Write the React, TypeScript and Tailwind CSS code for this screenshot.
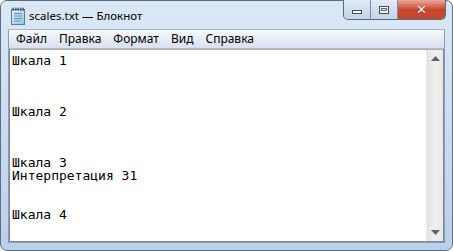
import React from 'react';

const lines = [
  'Шкала 1',
  '',
  '',
  '',
  'Шкала 2',
  '',
  '',
  '',
  'Шкала 3',
  'Интерпретация 31',
  '',
  '',
  'Шкала 4',
];

const menu = ['Файл', 'Правка', 'Формат', 'Вид', 'Справка'];

function NotepadIcon() {
  return (
    <svg width="16" height="18" viewBox="0 0 16 18">
      <defs>
        <linearGradient id="pad" x1="0" y1="0" x2="1" y2="1">
          <stop offset="0" stopColor="#e8f3fb" />
          <stop offset="1" stopColor="#8fc3e6" />
        </linearGradient>
      </defs>
      <rect x="1.5" y="2.5" width="13" height="15" fill="url(#pad)" stroke="#5b7c98" />
      <path d="M4 6.5h8M4 9h8M4 11.5h8M4 14h6" stroke="#6c8aa6" strokeWidth="1" />
      {[3, 5.5, 8, 10.5, 13].map((x) => (
        <rect key={x} x={x - 0.5} y="0.5" width="1.5" height="3.5" rx="0.7" fill="#4f6378" />
      ))}
    </svg>
  );
}

export default function App() {
  return (
    <div className="w-[453px] h-[251px] bg-white overflow-hidden">
      <div className="w-[453px] h-[251px] rounded-[7px] border border-[#5d6d82] bg-gradient-to-b from-[#dbe8f6] via-[#c9dcf0] to-[#b9d0ea] flex flex-col px-[7px] pb-[7px]">
        {/* title bar */}
        <div className="h-[28px] flex items-start relative">
          <div className="mt-[6px] ml-[2px]">
            <NotepadIcon />
          </div>
          <span className="ml-[3px] mt-[7px] text-[11.5px] leading-[16px] text-black font-['Noto_Sans',sans-serif]">
            scales.txt — Блокнот
          </span>
          <div className="absolute right-[-1px] top-[-1px] flex h-[20px] rounded-b-[5px] border border-t-0 border-[#5a6980] overflow-hidden">
            <div className="w-[27px] flex items-center justify-center bg-gradient-to-b from-[#e3ecf7] to-[#c2d3e9] border-r border-[#7b8ba0]">
              <div className="w-[10px] h-[4px] mt-[5px] bg-white border border-[#3f4d61]" />
            </div>
            <div className="w-[27px] flex items-center justify-center bg-gradient-to-b from-[#e3ecf7] to-[#c2d3e9] border-r border-[#7b8ba0]">
              <div className="w-[10px] h-[8px] border border-[#3f4d61] bg-white flex items-center justify-center">
                <div className="w-[6px] h-[3px] border border-[#5a6a80] bg-[#dbe6f3]" />
              </div>
            </div>
            <div className="w-[47px] flex items-center justify-center bg-gradient-to-b from-[#e9a99c] via-[#c9462c] to-[#c3492f]">
              <span className="text-white font-bold text-[13px] leading-none font-['DejaVu_Sans',sans-serif] [text-shadow:0_0_1px_#4a1a10]">✕</span>
            </div>
          </div>
        </div>

        {/* client */}
        <div className="flex-1 flex flex-col border border-[#8b9cb2] border-t-[#a9b6c8]">
          <div className="h-[19px] flex items-center bg-gradient-to-b from-[#f6f9fd] to-[#d9e1f0] border-b border-[#b6bcc6] font-['Noto_Sans',sans-serif] text-[12px] text-black pl-[1px]">
            {menu.map((m) => (
              <span key={m} className="px-[6px] leading-[16px]">{m}</span>
            ))}
          </div>
          <div className="flex-1 flex bg-white border border-[#828790] border-t-[#abadb3] min-h-0">
            <div className="flex-1 pl-[2px] pt-[5px] font-['DejaVu_Sans_Mono',monospace] text-[13px] leading-[12.8px] text-black whitespace-pre">
              {lines.map((l, i) => (
                <div key={i} className="h-[12.8px]">{l}</div>
              ))}
            </div>
            <div className="w-[17px] flex flex-col bg-gradient-to-r from-[#e3e3e3] via-[#f0f0f0] to-[#e8e8e8] border-l border-[#e9e9e9]">
              <div className="h-[17px] flex items-center justify-center">
                <svg width="9" height="5" viewBox="0 0 9 5"><path d="M0 5h9L4.5 0z" fill="#606060" /></svg>
              </div>
              <div className="flex-1" />
              <div className="h-[17px] flex items-center justify-center">
                <svg width="9" height="5" viewBox="0 0 9 5"><path d="M0 0h9L4.5 5z" fill="#606060" /></svg>
              </div>
            </div>
          </div>
        </div>
      </div>
    </div>
  );
}
